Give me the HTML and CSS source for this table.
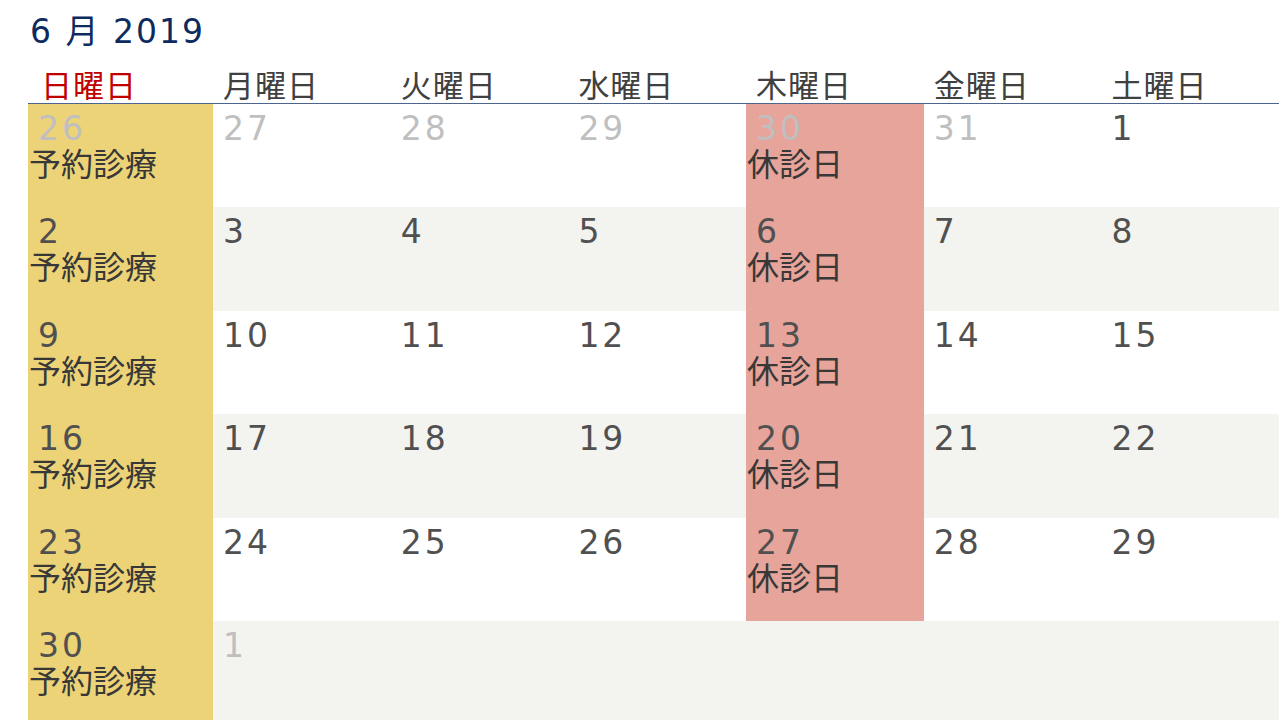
FILE: index.html
```html
<!DOCTYPE html>
<html lang="ja">
<head>
    <meta charset="UTF-8">
    <title>診療カレンダー 2019年6月</title>
    <link rel="stylesheet" href="styles.css">
</head>
<body>

<div class="calendar">
    <div class="title">6 月 2019</div>

    <div class="grid">
        <div class="head sun">日曜日</div>
        <div class="head">月曜日</div>
        <div class="head">火曜日</div>
        <div class="head">水曜日</div>
        <div class="head">木曜日</div>
        <div class="head">金曜日</div>
        <div class="head">土曜日</div>

        <!-- week 1 -->
        <div class="day open"><div class="num other">26</div><div class="note">予約診療</div></div>
        <div class="day"><div class="num other">27</div></div>
        <div class="day"><div class="num other">28</div></div>
        <div class="day"><div class="num other">29</div></div>
        <div class="day closed"><div class="num other">30</div><div class="note">休診日</div></div>
        <div class="day"><div class="num other">31</div></div>
        <div class="day"><div class="num">1</div></div>

        <!-- week 2 -->
        <div class="day open alt"><div class="num">2</div><div class="note">予約診療</div></div>
        <div class="day alt"><div class="num">3</div></div>
        <div class="day alt"><div class="num">4</div></div>
        <div class="day alt"><div class="num">5</div></div>
        <div class="day closed alt"><div class="num">6</div><div class="note">休診日</div></div>
        <div class="day alt"><div class="num">7</div></div>
        <div class="day alt"><div class="num">8</div></div>

        <!-- week 3 -->
        <div class="day open"><div class="num">9</div><div class="note">予約診療</div></div>
        <div class="day"><div class="num">10</div></div>
        <div class="day"><div class="num">11</div></div>
        <div class="day"><div class="num">12</div></div>
        <div class="day closed"><div class="num">13</div><div class="note">休診日</div></div>
        <div class="day"><div class="num">14</div></div>
        <div class="day"><div class="num">15</div></div>

        <!-- week 4 -->
        <div class="day open alt"><div class="num">16</div><div class="note">予約診療</div></div>
        <div class="day alt"><div class="num">17</div></div>
        <div class="day alt"><div class="num">18</div></div>
        <div class="day alt"><div class="num">19</div></div>
        <div class="day closed alt"><div class="num">20</div><div class="note">休診日</div></div>
        <div class="day alt"><div class="num">21</div></div>
        <div class="day alt"><div class="num">22</div></div>

        <!-- week 5 -->
        <div class="day open"><div class="num">23</div><div class="note">予約診療</div></div>
        <div class="day"><div class="num">24</div></div>
        <div class="day"><div class="num">25</div></div>
        <div class="day"><div class="num">26</div></div>
        <div class="day closed"><div class="num">27</div><div class="note">休診日</div></div>
        <div class="day"><div class="num">28</div></div>
        <div class="day"><div class="num">29</div></div>

        <!-- week 6 -->
        <div class="day open alt"><div class="num">30</div><div class="note">予約診療</div></div>
        <div class="day alt"><div class="num other">1</div></div>
        <div class="day alt"></div>
        <div class="day alt"></div>
        <div class="day alt"></div>
        <div class="day alt"></div>
        <div class="day alt"></div>
    </div>
</div>

</body>
</html>
```

FILE: styles.css
```css
html {
    background-color: #fff;
}

body {
    margin: 0;
    width: 1280px;
    height: 720px;
    overflow: hidden;
    font-family: "DejaVu Sans", "Noto Sans CJK JP", sans-serif;
    color: #404040;
}

.calendar {
    padding-left: 28px;
}

.title {
    height: 64px;
    padding: 13px 0 0 2px;
    box-sizing: border-box;
    font-size: 33px;
    line-height: 38px;
    letter-spacing: 2px;
    color: #0d2b5e;
}

.grid {
    display: grid;
    grid-template-columns: 185px repeat(6, 177.7px);
    grid-template-rows: 40px repeat(6, 103.4px);
}

.head {
    padding-left: 10px;
    font-family: "Noto Sans CJK JP", sans-serif;
    font-size: 31px;
    line-height: 40px;
    letter-spacing: 1px;
    color: #404040;
    border-bottom: 1px solid #4d6390;
}

.head.sun {
    padding-left: 13px;
    color: #c00000;
}

.day {
    background: #fff;
}

.day.alt {
    background: #f3f3ef;
}

.day.open {
    background: #edd377;
}

.day.closed {
    background: #e7a49b;
}

.num {
    padding: 8px 0 0 10px;
    font-size: 33px;
    line-height: 34px;
    letter-spacing: 3px;
    color: #505050;
}

.num.other {
    color: #bfbfbf;
}

.note {
    padding-left: 1px;
    font-family: "Noto Sans CJK JP", sans-serif;
    font-size: 32px;
    line-height: 32px;
    color: #383838;
}
```
